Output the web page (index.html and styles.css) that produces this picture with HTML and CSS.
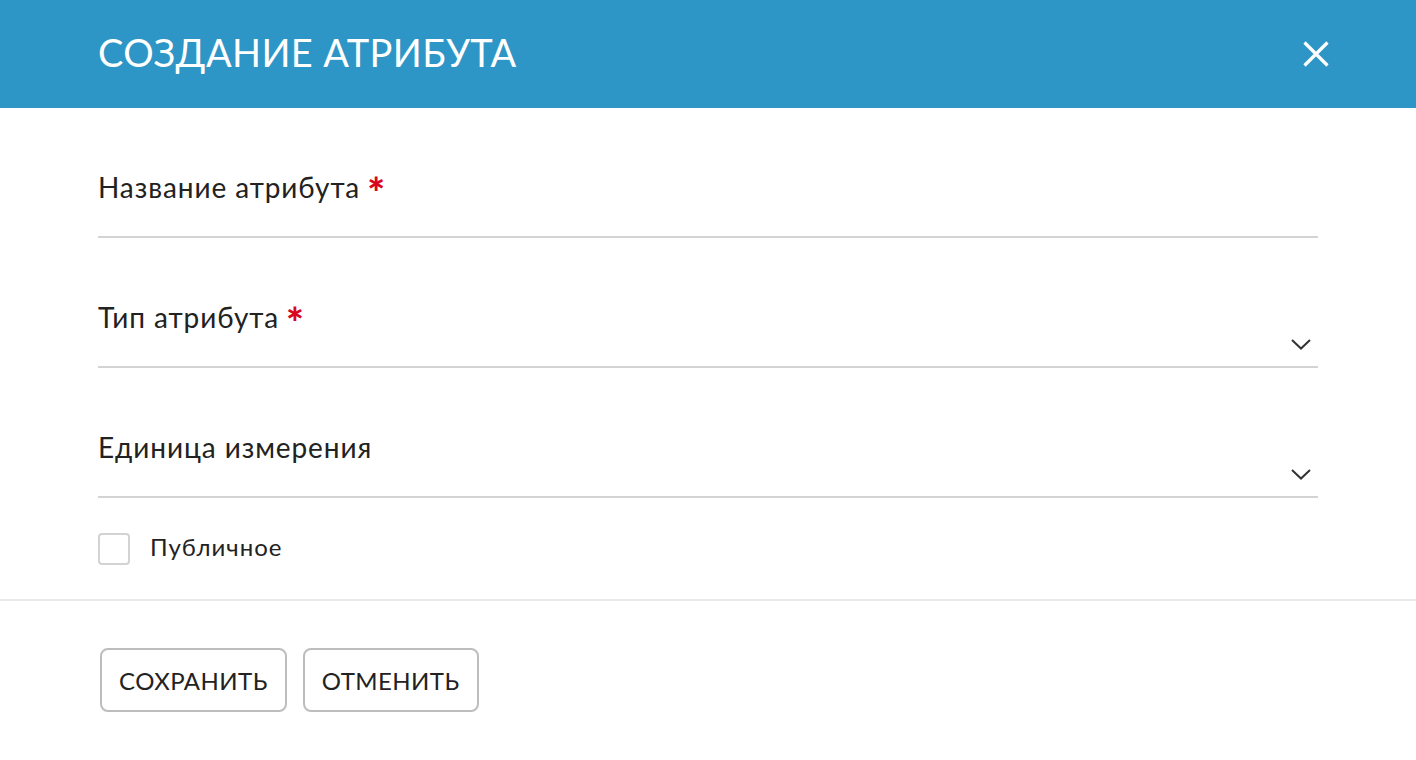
FILE: index.html
```html
<!DOCTYPE html>
<html lang="ru">
<head>
<meta charset="utf-8">
<link rel="stylesheet" href="styles.css">
</head>
<body>
<div class="modal">
  <header class="modal-header">
    <h1 class="modal-title">СОЗДАНИЕ АТРИБУТА</h1>
    <button class="close" aria-label="Закрыть">
      <svg width="26" height="26" viewBox="0 0 26 26"><path d="M1.5 1.5 L24.5 24.5 M24.5 1.5 L1.5 24.5" stroke="#fff" stroke-width="3.2" fill="none"/></svg>
    </button>
  </header>
  <div class="modal-body">
    <div class="field">
      <div class="label">Название атрибута <span class="req">*</span></div>
    </div>
    <div class="field select">
      <div class="label">Тип атрибута <span class="req">*</span></div>
      <svg class="chev" width="20" height="11" viewBox="0 0 20 11"><path d="M1 1 L10 9.5 L19 1" stroke="#333" stroke-width="2" fill="none"/></svg>
    </div>
    <div class="field select">
      <div class="label">Единица измерения</div>
      <svg class="chev" width="20" height="11" viewBox="0 0 20 11"><path d="M1 1 L10 9.5 L19 1" stroke="#333" stroke-width="2" fill="none"/></svg>
    </div>
    <label class="check">
      <span class="box"></span>
      <span class="check-text">Публичное</span>
    </label>
  </div>
  <footer class="modal-footer">
    <button class="btn">СОХРАНИТЬ</button>
    <button class="btn">ОТМЕНИТЬ</button>
  </footer>
</div>
</body>
</html>
```
FILE: styles.css
```css
* { box-sizing: border-box; }
html, body { margin: 0; padding: 0; background: #fff; }
body { font-family: "Lato", "Open Sans", sans-serif; color: #222; }
.modal { width: 1416px; }
.modal-header {
  height: 108px;
  background: #2d96c6;
  display: flex;
  align-items: center;
  justify-content: space-between;
  padding: 0 84px 0 98px;
}
.modal-title {
  margin: 0;
  color: #fff;
  font-weight: 400;
  font-size: 38px;
  letter-spacing: 0.4px;
  margin-top: -4px;
}
.close {
  background: none; border: 0; padding: 0; width: 26px; height: 26px;
  display: flex; margin-right: 3px;
}
.modal-body { padding: 0 98px 0 98px; }
.field {
  height: 130px;
  border-bottom: 2px solid #d3d3d3;
  position: relative;
  padding-top: 63px;
}
.label { font-size: 28px; color: #222; line-height: 32px; letter-spacing: 0.9px; }
.req { color: #d8061e; font-weight: 900; font-size: 42px; line-height: 20px; vertical-align: -10px; margin-left: -1px; }
.chev { position: absolute; right: 7px; bottom: 16px; }
.check {
  display: flex; align-items: center; gap: 20px;
  height: 101px;
}
.box {
  width: 32px; height: 32px; border: 2px solid #d3d3d3; border-radius: 4px;
}
.check-text { font-size: 24px; color: #222; letter-spacing: 1px; margin-top: -4px; }
.modal-footer {
  border-top: 2px solid #e8e8e8;
  padding: 47px 100px;
  display: flex; gap: 16px;
}
.btn {
  font-family: inherit;
  background: #fff;
  border: 2px solid #bdbdbd;
  border-radius: 8px;
  height: 64px;
  padding: 0 17px;
  font-size: 24px;
  letter-spacing: 0.45px;
  color: #222;
}
```
